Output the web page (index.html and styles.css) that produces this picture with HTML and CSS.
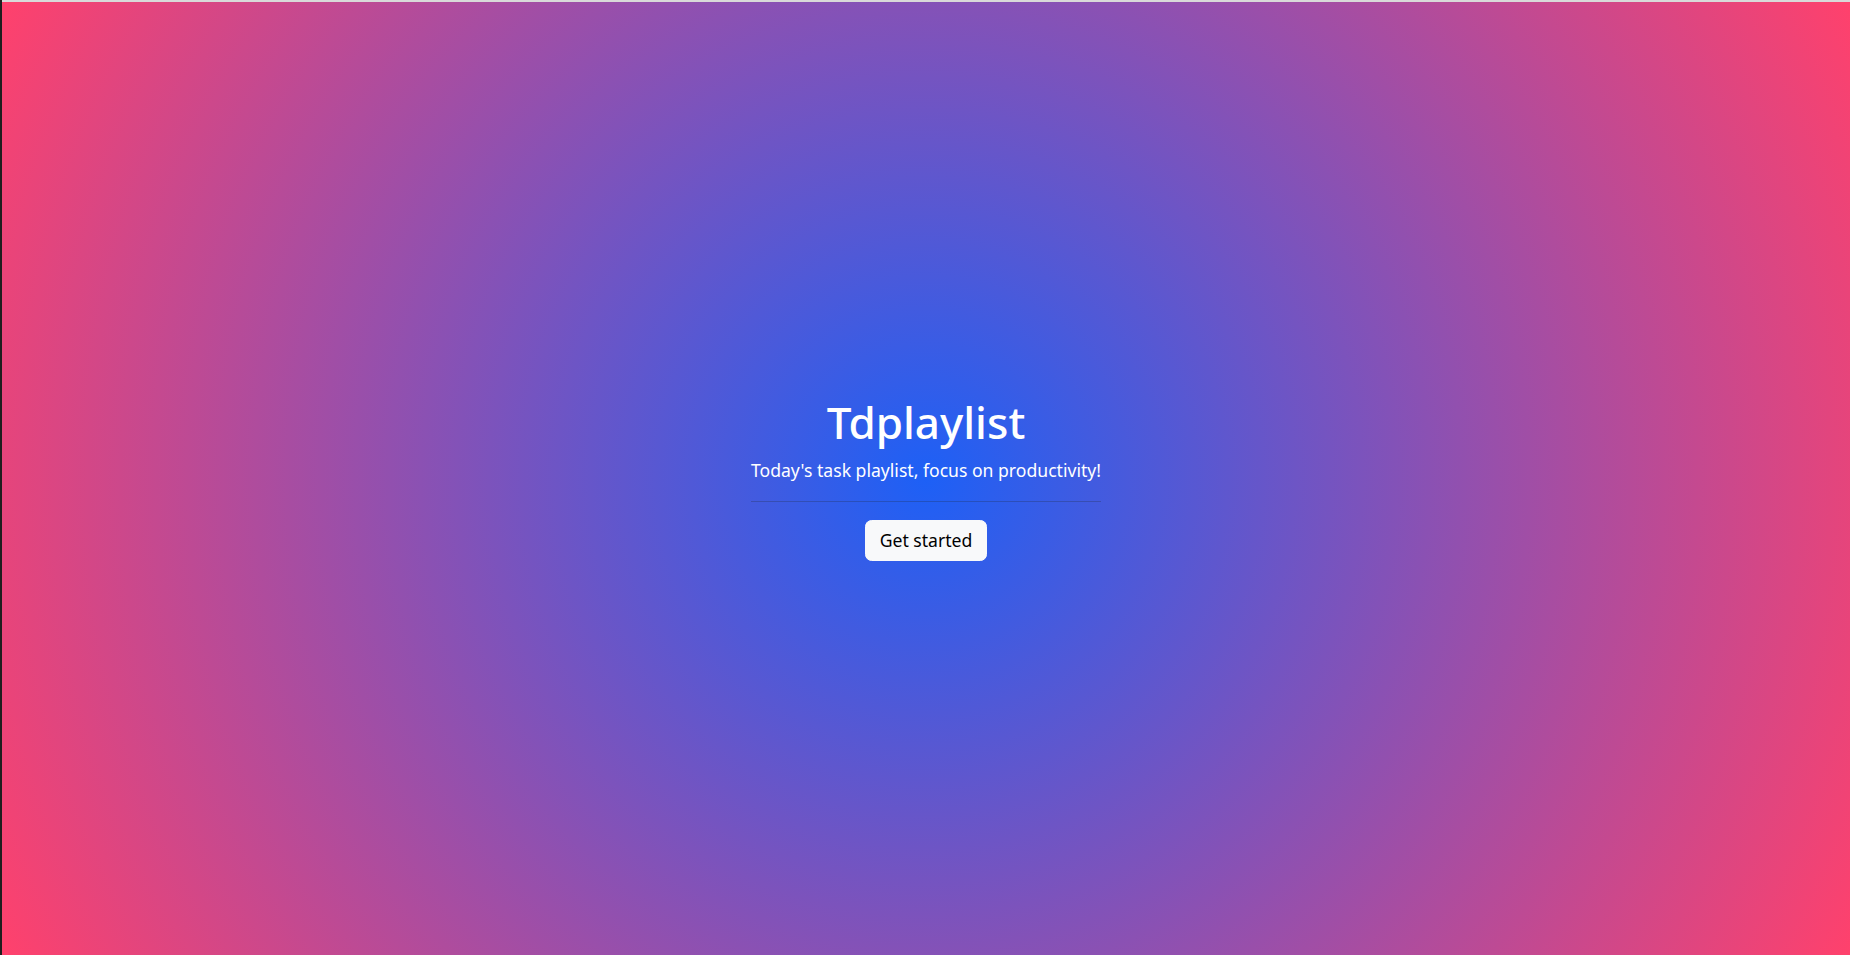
FILE: index.html
```html
<!DOCTYPE html>
<html lang="en">
<head>
<meta charset="utf-8">
<title>Tdplaylist</title>
<link rel="stylesheet" href="styles.css">
</head>
<body>
<main class="hero">
  <div class="hero-content">
    <h1 class="hero-title">Tdplaylist</h1>
    <p class="hero-lead">Today's task playlist, focus on productivity!</p>
    <hr class="hero-rule">
    <button class="btn-start" type="button">Get started</button>
  </div>
</main>
</body>
</html>
```
FILE: styles.css
```css
html, body {
  margin: 0;
  padding: 0;
  height: 100%;
}
body {
  background: #1e1e1e;
  font-family: "Noto Sans", "Open Sans", sans-serif;
  color: #fff;
}
.hero {
  box-sizing: border-box;
  margin-left: 2px;
  height: 100%;
  border-top: 2px solid #d9d9d9;
  background: radial-gradient(circle farthest-corner at 50% 50%, #1d60f6 0%, #ff416c 100%);
  display: flex;
  align-items: center;
  justify-content: center;
}
.hero-content {
  display: flex;
  flex-direction: column;
  align-items: center;
  text-align: center;
}
.hero-title {
  margin: 0 0 8.8px;
  font-size: 44px;
  font-weight: 500;
  line-height: 1.2;
}
.hero-lead {
  margin: 0;
  font-size: 17.6px;
  line-height: 1.5;
}
.hero-rule {
  align-self: stretch;
  margin: 17.6px 0;
  border: 0;
  border-top: 1px solid #212529;
  opacity: 0.25;
}
.btn-start {
  font-family: inherit;
  font-size: 17.6px;
  line-height: 1.5;
  padding: 6.6px 13.2px;
  color: #000;
  background: #f8f9fa;
  border: 1.1px solid #f8f9fa;
  border-radius: 6.6px;
  cursor: pointer;
}
```
